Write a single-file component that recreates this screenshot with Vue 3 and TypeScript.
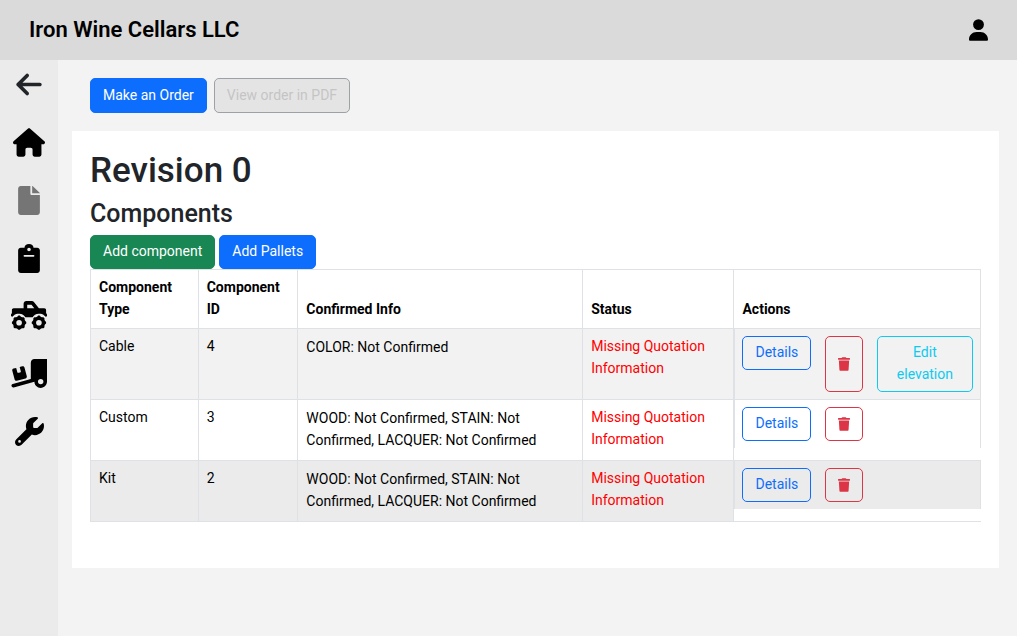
<script setup lang="ts">
interface Icon {
  label: string
  viewBox: string
  width: number
  path: string
  muted?: boolean
}

interface Component {
  id: number
  type: string
  info: string
  status: string
  elevation: boolean
}

const tooth = (cx: number, cy: number): string => {
  let d = ''
  for (let i = 0; i < 32; i++) {
    const r = i % 4 < 2 ? 128 : 112
    const a = ((i - 0.5) * Math.PI) / 16
    d += `${i ? 'L' : 'M'}${(cx + r * Math.cos(a)).toFixed(1)} ${(cy + r * Math.sin(a)).toFixed(1)}`
  }
  return `${d}zM${cx - 50} ${cy}a50 50 0 1 0 100 0a50 50 0 1 0 -100 0z`
}

const groups: Icon[][] = [
  [
    {
      label: 'Back', viewBox: '0 0 448 512', width: 26,
      path: 'M9.4 233.4c-12.5 12.5-12.5 32.8 0 45.3l160 160c12.5 12.5 32.8 12.5 45.3 0s12.5-32.8 0-45.3L109.2 288 416 288c17.7 0 32-14.3 32-32s-14.3-32-32-32l-306.7 0L214.6 118.6c12.5-12.5 12.5-32.8 0-45.3s-32.8-12.5-45.3 0l-160 160z',
    },
    {
      label: 'Home', viewBox: '0 0 576 512', width: 32,
      path: 'M575.8 255.5c0 18-15 32.1-32 32.1h-32l.7 160.2c0 2.7-.2 5.4-.5 8.1V472c0 22.1-17.9 40-40 40H456c-1.1 0-2.2 0-3.3-.1c-1.4 .1-2.8 .1-4.2 .1H416 392c-22.1 0-40-17.9-40-40V448 384c0-17.7-14.3-32-32-32H256c-17.7 0-32 14.3-32 32v64 24c0 22.1-17.9 40-40 40H160 128.1c-1.5 0-3-.1-4.5-.2c-1.2 .1-2.4 .2-3.6 .2H104c-22.1 0-40-17.9-40-40V360c0-.9 0-1.9 .1-2.8V287.6H32c-18 0-32-14-32-32.1c0-9 3-17 10-24L266.4 8c7-7 15-8 22-8s15 2 21 7L564.8 231.5c8 7 12 15 11 24z',
    },
    {
      label: 'Documents', viewBox: '0 0 384 512', width: 22, muted: true,
      path: 'M48 0H216V136c0 13.3 10.7 24 24 24H384V464c0 26.5-21.5 48-48 48H48c-26.5 0-48-21.5-48-48V48C0 21.5 21.5 0 48 0zM248 0h8L384 122v6H248z',
    },
    {
      label: 'Orders', viewBox: '0 0 384 512', width: 22,
      path: 'M48 64H112C112 28.7 147 0 192 0s80 28.7 80 64h64c26.5 0 48 21.5 48 48V464c0 26.5-21.5 48-48 48H48c-26.5 0-48-21.5-48-48V112C0 85.5 21.5 64 48 64zM192 64a32 32 0 1 0 0 64 32 32 0 1 0 0-64zM112 192a16 16 0 0 0 0 32H272a16 16 0 0 0 0-32z',
    },
  ],
  [
    {
      label: 'Trucks', viewBox: '0 0 640 512', width: 36,
      path: `M272 0H370C385 0 401 7 411 20L496 128H592C610 128 624 142 624 160V212L640 240V256C640 282 610 282 600 264C570 226 532 224 496 224C440 224 404 252 384 288H256C236 252 200 224 144 224C108 224 70 226 40 264C30 282 0 282 0 256V240L16 212V160C16 142 30 128 48 128H224V48C224 22 246 0 272 0zM288 64V128H414L364 64z${tooth(144, 384)}${tooth(496, 384)}`,
    },
    {
      label: 'Shipping', viewBox: '0 0 640 512', width: 36,
      path: 'M640 0V400c0 61.9-50.1 112-112 112c-61 0-110.5-48.7-112-109.3L48.4 502.9c-17.1 4.6-34.6-5.4-39.3-22.5s5.4-34.6 22.5-39.3L352 353.8V64c0-35.3 28.7-64 64-64H640zM576 400a48 48 0 1 0 -96 0 48 48 0 1 0 96 0zM23.1 207.7c-4.6-17.1 5.6-34.6 22.6-39.2l46.4-12.4 20.7 77.3c2.3 8.5 11.1 13.6 19.6 11.3l30.9-8.3c8.5-2.3 13.6-11.1 11.3-19.6l-20.7-77.3 46.4-12.4c17.1-4.6 34.6 5.6 39.2 22.6l41.4 154.5c4.6 17.1-5.6 34.6-22.6 39.2L103.7 384.9c-17.1 4.6-34.6-5.6-39.2-22.6L23.1 207.7z',
    },
    {
      label: 'Tools', viewBox: '0 0 512 512', width: 29,
      path: 'M352 320c88.4 0 160-71.6 160-160c0-15.3-2.2-30.1-6.2-44.2c-3.1-10.8-16.4-13.2-24.3-5.3l-76.8 76.8c-3 3-7.1 4.7-11.3 4.7H336c-8.8 0-16-7.2-16-16V118.6c0-4.2 1.7-8.3 4.7-11.3l76.8-76.8c7.9-7.9 5.4-21.2-5.3-24.3C382.1 2.2 367.3 0 352 0C263.6 0 192 71.6 192 160c0 19.1 3.4 37.5 9.5 54.5L19.9 396.1C7.2 408.8 0 426.1 0 444.1C0 481.6 30.4 512 67.9 512c18 0 35.3-7.2 48-19.9L297.5 310.5c17 6.2 35.4 9.5 54.5 9.5zM80 408a24 24 0 1 1 0 48 24 24 0 1 1 0-48z',
    },
  ],
]

const missing = 'Missing Quotation Information'
const allInfo = 'WOOD: Not Confirmed, STAIN: Not Confirmed, LACQUER: Not Confirmed'
const components: Component[] = [
  { id: 4, type: 'Cable', info: 'COLOR: Not Confirmed', status: missing, elevation: true },
  { id: 3, type: 'Custom', info: allInfo, status: missing, elevation: false },
  { id: 2, type: 'Kit', info: allInfo, status: missing, elevation: false },
]
</script>

<template>
  <div class="app">
    <header class="topbar">
      <div class="brand">Iron Wine Cellars LLC</div>
      <a href="#" class="account" aria-label="Account">
        <svg width="19" height="22" viewBox="0 0 448 512">
          <path d="M224 256A128 128 0 1 0 224 0a128 128 0 1 0 0 256zm-45.7 48C79.8 304 0 383.8 0 482.3C0 498.7 13.3 512 29.7 512H418.3c16.4 0 29.7-13.3 29.7-29.7C448 383.8 368.2 304 269.7 304H178.3z" />
        </svg>
      </a>
    </header>
    <div class="body">
      <nav class="sidebar" aria-label="Main">
        <div v-for="(group, g) in groups" :key="g" class="group">
          <a
            v-for="icon in group"
            :key="icon.label"
            href="#"
            class="nav-link"
            :class="{ muted: icon.muted, back: icon.label === 'Back' }"
            :aria-label="icon.label"
          >
            <svg :width="icon.width" height="29" :viewBox="icon.viewBox">
              <path fill-rule="evenodd" :d="icon.path" />
            </svg>
          </a>
        </div>
      </nav>
      <main class="main">
        <div class="toolbar">
          <button type="button" class="btn primary">Make an Order</button>
          <button type="button" class="btn disabled" disabled>View order in PDF</button>
        </div>
        <section class="card">
          <h1>Revision 0</h1>
          <h2>Components</h2>
          <div class="adders">
            <button type="button" class="btn success">Add component</button>
            <button type="button" class="btn primary">Add Pallets</button>
          </div>
          <table>
            <colgroup>
              <col class="c-type" />
              <col class="c-id" />
              <col class="c-info" />
              <col class="c-status" />
              <col />
            </colgroup>
            <thead>
              <tr>
                <th>Component Type</th>
                <th>Component ID</th>
                <th>Confirmed Info</th>
                <th>Status</th>
                <th>Actions</th>
              </tr>
            </thead>
            <tbody>
              <tr v-for="item in components" :key="item.id">
                <td>{{ item.type }}</td>
                <td>{{ item.id }}</td>
                <td class="info">{{ item.info }}</td>
                <td class="status">{{ item.status }}</td>
                <td class="actions">
                  <button type="button" class="btn details">Details</button>
                  <button type="button" class="btn delete" aria-label="Delete">
                    <svg width="12" height="14" viewBox="0 0 448 512">
                      <path d="M432 32H312l-9.4-18.7A24 24 0 0 0 281.1 0H166.8a23.72 23.72 0 0 0-21.4 13.3L136 32H16A16 16 0 0 0 0 48v32a16 16 0 0 0 16 16h416a16 16 0 0 0 16-16V48a16 16 0 0 0-16-16zM53.2 467a48 48 0 0 0 47.9 45h245.8a48 48 0 0 0 47.9-45L416 128H32z" />
                    </svg>
                  </button>
                  <button v-if="item.elevation" type="button" class="btn elevation">Edit elevation</button>
                </td>
              </tr>
            </tbody>
          </table>
        </section>
      </main>
    </div>
  </div>
</template>

<style>
body {
  margin: 0;
  background: #f3f3f3;
}
</style>

<style scoped>
* {
  box-sizing: border-box;
}
.app {
  display: flex;
  flex-direction: column;
  min-height: 100vh;
  font-family: Roboto, "Liberation Sans", sans-serif;
  font-size: 14px;
  line-height: 22px;
  color: #212529;
}
svg {
  display: block;
  fill: currentColor;
}
.topbar {
  display: flex;
  align-items: center;
  justify-content: space-between;
  height: 60px;
  padding: 0 29px 1px;
  background: #dadada;
  color: #000;
}
.brand {
  font-size: 22px;
  font-weight: 600;
}
.account {
  color: #000;
}
.body {
  display: flex;
  flex: 1;
}
.sidebar {
  display: flex;
  flex-direction: column;
  gap: 27px;
  width: 58px;
  flex-shrink: 0;
  padding-top: 9px;
  background: #ebebeb;
}
.group {
  display: flex;
  flex-direction: column;
  gap: 28px;
}
.nav-link {
  display: flex;
  align-items: center;
  justify-content: center;
  height: 30px;
  color: #000;
}
.nav-link.muted {
  color: #757575;
}
.nav-link.back {
  color: #212529;
}
.main {
  flex: 1;
  min-width: 0;
  padding: 18px 18px 18px 14px;
}
.toolbar {
  display: flex;
  gap: 7px;
  padding: 0 18px;
  margin-bottom: 18px;
}
.btn {
  padding: 4px 12px 6px;
  border: 1px solid transparent;
  border-radius: 5px;
  background: transparent;
  font: inherit;
  cursor: pointer;
}
.toolbar .btn {
  padding-top: 5px;
}
.primary {
  background: #0d6efd;
  border-color: #0d6efd;
  color: #fff;
}
.success {
  background: #198754;
  border-color: #198754;
  color: #fff;
}
.disabled {
  background: #e4e4e4;
  border-color: #9ca1a6;
  color: #c4c4c4;
  cursor: default;
}
.card {
  padding: 18px 18px 46px;
  background: #fff;
}
h1,
h2 {
  margin: 0 0 7px;
  font-weight: 500;
}
h1 {
  font-size: 35px;
  line-height: 43px;
}
h2 {
  font-size: 25px;
  line-height: 29px;
}
.adders {
  display: flex;
  gap: 4px;
}
table {
  width: 100%;
  table-layout: fixed;
  border-collapse: collapse;
  color: #000;
}
.c-type {
  width: 12.1%;
}
.c-id {
  width: 11.2%;
}
.c-info {
  width: 32%;
}
.c-status {
  width: 17%;
}
tr {
  border: solid #dee2e6;
  border-width: 1px 0;
}
th,
td {
  padding: 6px 8px 8px;
  border: solid #dee2e6;
  border-width: 0 1px;
  text-align: left;
  vertical-align: top;
}
th {
  font-weight: 700;
  vertical-align: bottom;
}
tbody tr:nth-child(odd) td {
  background: #f2f2f2;
}
tbody tr:last-child td {
  background: #ebebeb;
}
td.info {
  padding: 7px 8px 9px;
}
td.status {
  color: #f00;
}
td.actions {
  display: flex;
  gap: 14px;
  padding: 7px;
}
.details {
  flex-shrink: 0;
  align-self: flex-start;
  border-color: #0d6efd;
  color: #0d6efd;
}
.delete {
  display: flex;
  align-items: center;
  flex-shrink: 0;
  min-height: 34px;
  padding: 0 12px;
  border-color: #dc3545;
  color: #dc3545;
}
.elevation {
  border-color: #0dcaf0;
  color: #0dcaf0;
}
</style>
